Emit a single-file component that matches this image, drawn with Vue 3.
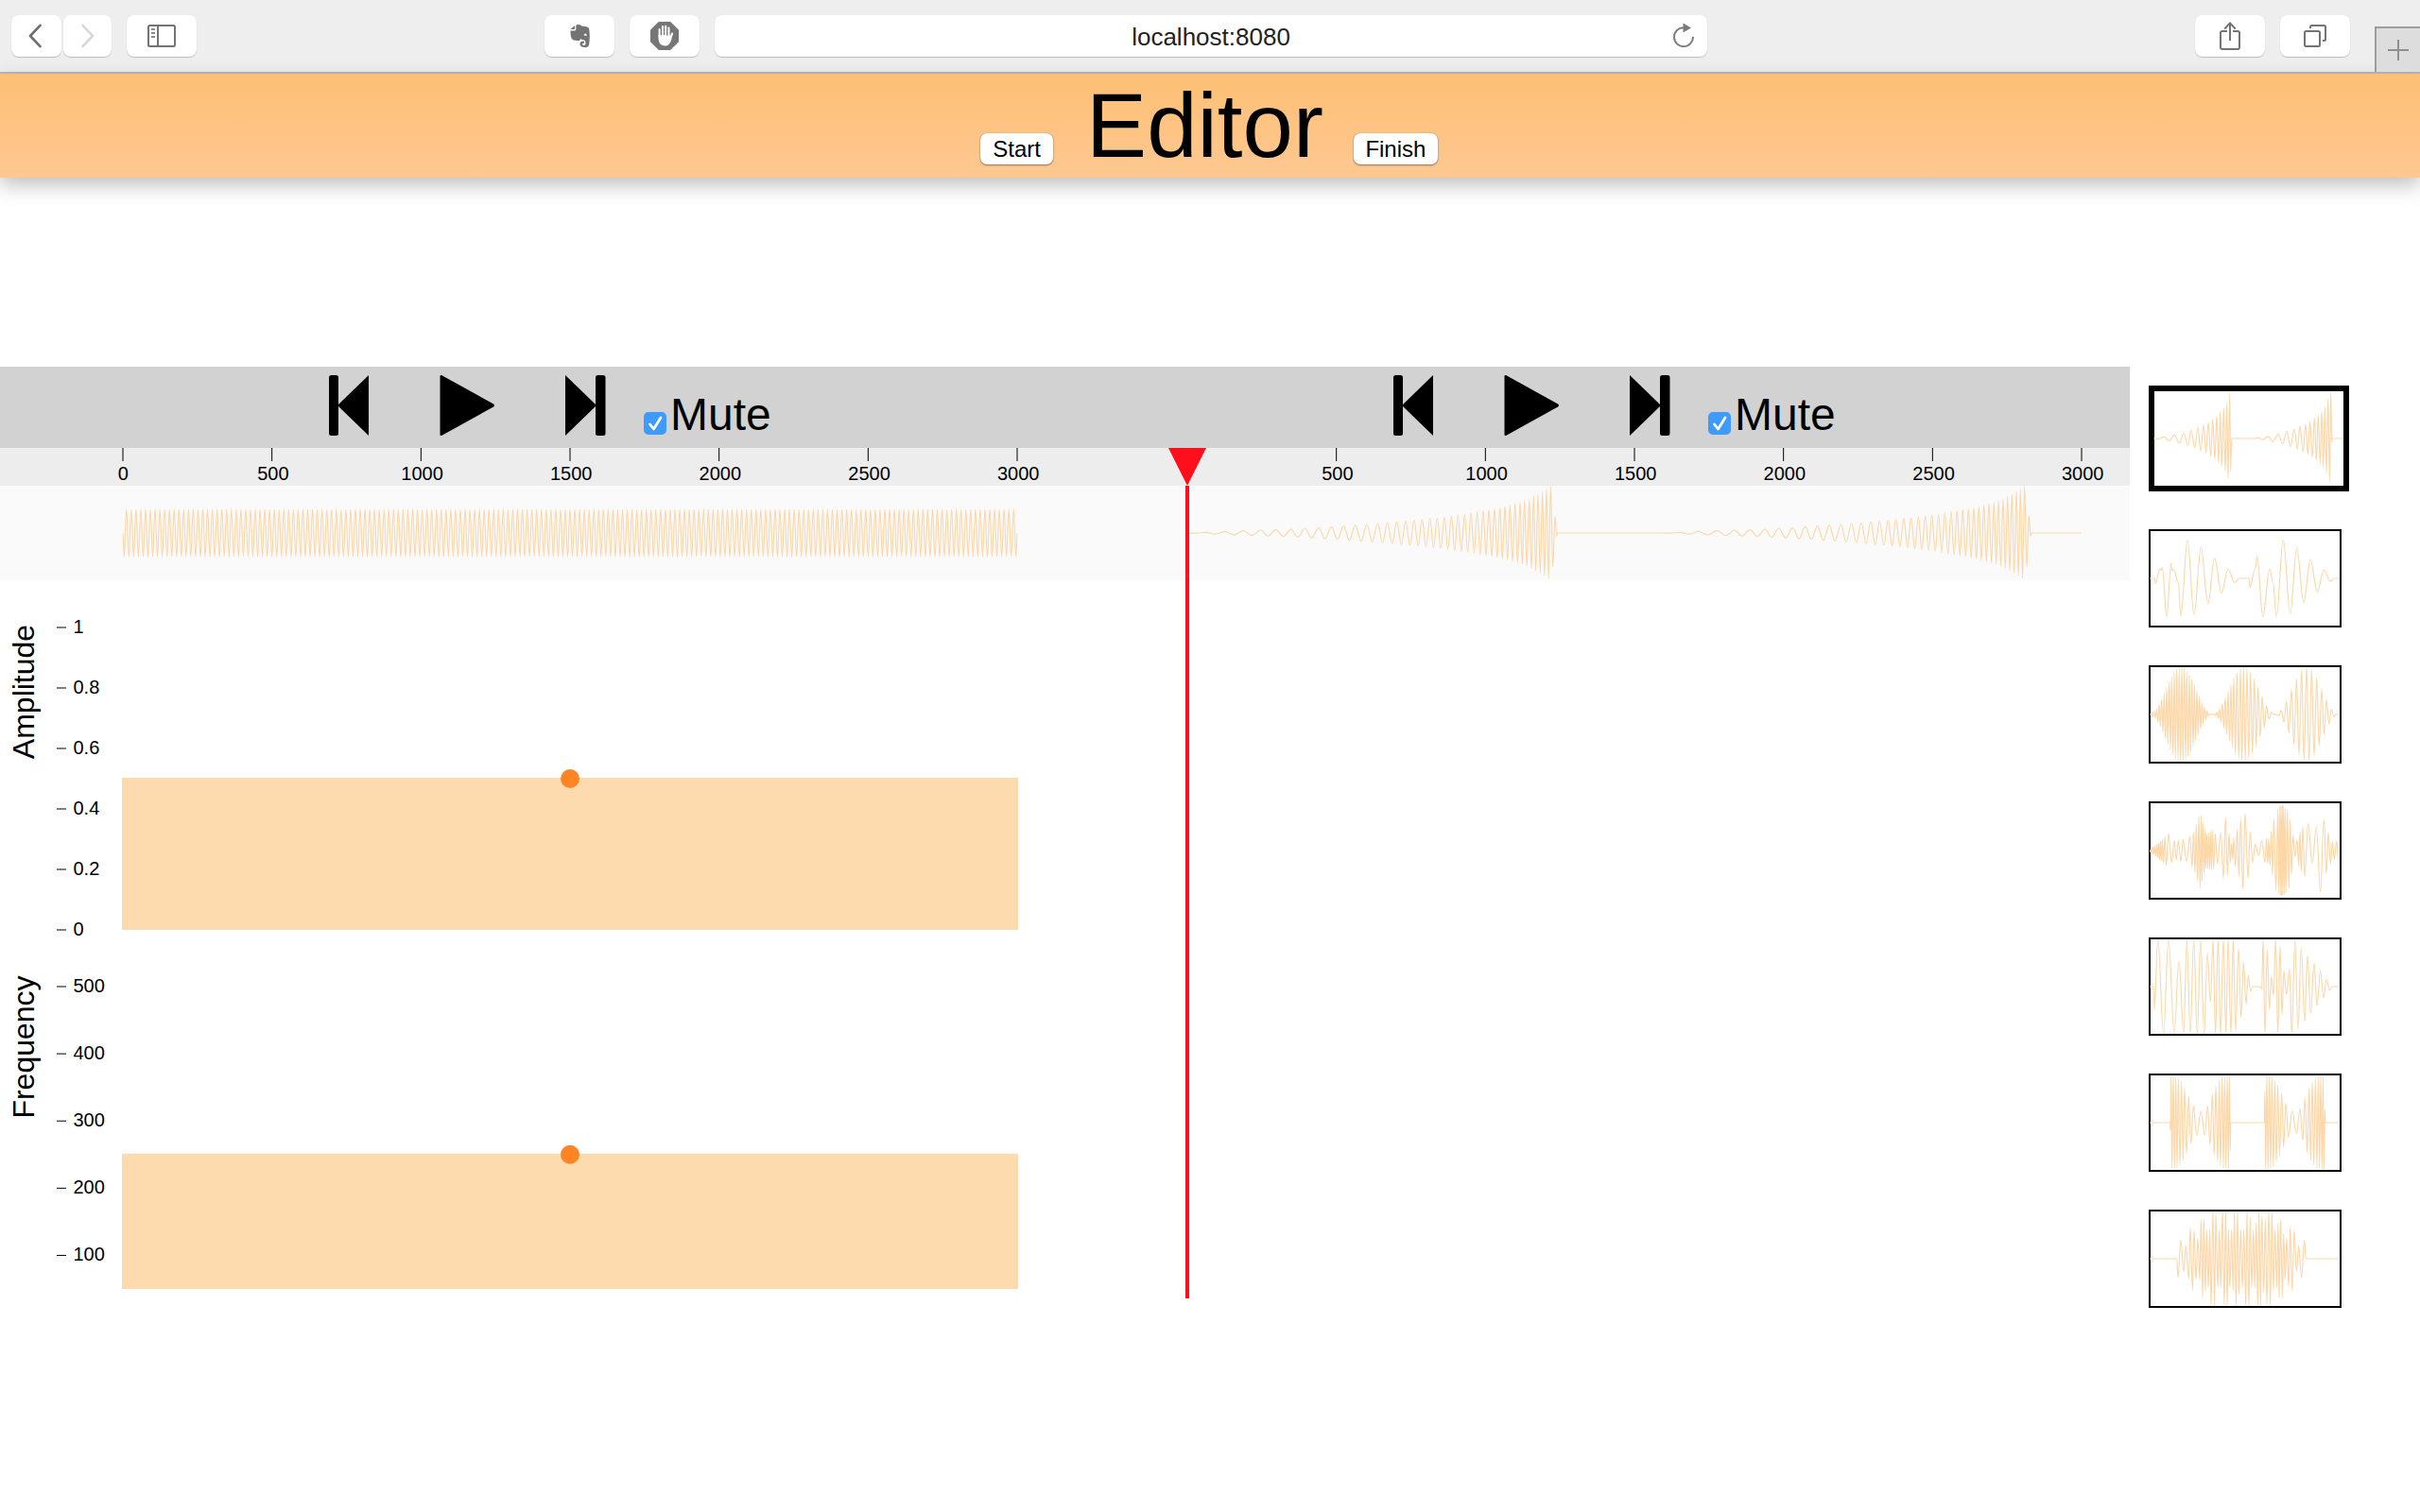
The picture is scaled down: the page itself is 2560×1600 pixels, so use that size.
<script setup>
// Smooth path through successive extrema; each half wave approximates a sine arc.
function smooth(points, ox = 0, oy = 0, scale = 1) {
  const p = points.map(([x, y]) => [(x - ox) / scale, (y - oy) / scale])
  let d = `M${p[0][0].toFixed(2)} ${p[0][1].toFixed(2)}`
  for (let i = 1; i < p.length; i++) {
    const [ax, ay] = p[i - 1]
    const [bx, by] = p[i]
    const k = (bx - ax) * 0.3642
    d += `C${(ax + k).toFixed(2)} ${ay.toFixed(2)} ${(bx - k).toFixed(2)} ${by.toFixed(2)} ${bx.toFixed(2)} ${by.toFixed(2)}`
  }
  return d
}

function parse(text) {
  return text.trim().split(/\s+/).map((pair) => pair.split(',').map(Number))
}

// Constant tone: 187.5 visible cycles
const tonePoints = [[130, 50]]
const half = 946 / 375
for (let i = 0; i < 375; i++) {
  tonePoints.push([130 + half * (i + 0.5), i % 2 ? 25 : 75])
}
tonePoints.push([1076, 50])
const tonePath = smooth(tonePoints)

// Rising chirp, played twice
const crests = parse(`77,160 137,157 196,155 250,153 299,152 347,150 391,147 435,145 475,142 514,140
  551,137 588,135 622,132 653,129 683,126 711,124 738,121 763,119 788,116 811,114 834,111 856,109
  877,105 898,102 918,98 938,94 957,91 975,89 993,86 1010,82 1026,77 1042,74 1058,68 1074,65
  1088,60 1103,55 1117,45 1131,38 1145,30 1158,23 1171,13`)
function burst(shift) {
  const out = [[18 + shift, 162], [50 + shift, 162.5]]
  crests.forEach(([x, y], i) => {
    out.push([x + shift, y])
    const next = crests[i + 1]
    if (next) out.push([(x + next[0]) / 2 + shift, 324 - (y + next[1]) / 2])
  })
  return out.concat([[1178, 269], [1185, 108], [1190, 172], [1193, 162]].map(([x, y]) => [x + shift, y]))
}
const chirpPath = smooth([...burst(0), ...burst(1504), [2856, 162]], -372, 12, 3)

// Three beating lobes with falling pitch
function beats() {
  const tops = [48, 56, 64, 72, 80, 88, 96, 104, 112, 120, 128, 136, 144, 152, 160, 168, 176, 184, 192, 200, 208,
    216, 224, 232, 240, 248, 256, 264, 273, 282, 291, 300, 309, 319, 330, 340, 351, 362, 374, 386, 399, 413, 428,
    444, 460, 476, 492, 508, 524, 540, 556, 572, 588, 603, 619, 635]
  const env = (x) => 150 * Math.sin((Math.PI * (x - 42)) / 199.5) ** 2
  const out = [[42, 228]]
  tops.forEach((x, i) => {
    out.push([x, 228 - env(x)])
    const n = tops[i + 1]
    if (n) out.push([(x + n) / 2, 228 + env((x + n) / 2)])
  })
  out.push([641, 228])
  return out
}

const thumbs = [
  { d: smooth(parse(`55,192 72,193 87,187 105,200 121,181 136,207 150,174 163,214 174,166 185,222 195,157 204,232
    213,149 221,239 228,142 236,248 242,131 249,257 255,120 261,268 266,107 271,280 277,97 282,294 287,76 291,320
    296,51 299,297 302,192 376,192 388,190 400,196 418,185 433,202 450,179 464,209 477,170 489,217 501,163 511,226
    519,154 529,234 537,147 544,242 551,138 558,251 565,127 571,261 577,118 583,272 588,104 593,286 598,93 603,303
    608,66 613,329 617,44 620,206 621,192 653,192`), 57, 42, 3), active: true },
  { d: smooth(parse(`42,636 58,636 60,652 75,607 79,610 82,602 96,758 110,588 113,612 118,606 133,650 141,755 162,514
    183,752 205,537 227,717 248,572 270,683 291,606 311,649 328,636 358,636 360,665 377,606 383,566 401,758 423,606
    434,650 444,758 466,514 488,748 509,541 531,712 552,576 574,679 595,610 615,645 628,636 641,636`), 45, 486, 3) },
  { d: smooth(beats(), 45, 78, 3) },
  { d: smooth(parse(`42,660 44,664 46,655 49,669 52,650 55,672 58,645 61,678 64,640 67,683 70,635 73,689 76,630 79,694
    82,625 86,699 90,617 95,707 102,608 112,700 120,628 127,690 133,628 141,695 148,625 159,694 170,616 177,712
    181,601 186,731 190,576 194,756 198,551 202,780 206,550 208,758 211,573 215,737 218,592 220,716 223,608 226,717
    229,603 232,719 235,600 238,722 241,595 245,719 250,606 257,702 268,605 276,748 283,556 289,739 294,603 298,698
    302,638 306,689 309,620 314,710 320,594 325,741 331,560 338,783 345,541 354,749 361,601 369,698 377,640 388,676
    398,628 408,698 413,620 417,702 420,622 424,707 428,599 432,738 436,558 443,788 449,526 452,796 455,520 457,802
    459,518 461,803 463,515 465,802 467,518 470,798 472,525 475,792 479,530 484,780 488,561 492,735 497,612 503,680
    510,625 515,709 519,601 523,727 528,586 534,743 545,575 558,701 571,586 584,792 595,563 603,734 609,603 616,702
    622,631 628,689 635,630 641,689`), 45, 510, 3) },
  { d: smooth(parse(`42,192 56,192 57,266 68,42 86,342 102,42 120,342 135,110 150,342 160,42 171,342 182,42 193,342
    204,42 215,342 225,85 235,242 243,45 251,342 259,42 267,342 276,42 284,342 291,42 300,342 307,42 315,333 324,71
    332,290 340,114 348,247 355,157 362,206 369,192 390,192 398,199 402,42 408,342 415,76 422,265 428,160 435,218
    442,42 449,342 456,64 462,281 468,143 476,218 486,136 493,342 503,45 513,327 523,69 534,302 543,94 553,278
    564,118 573,252 584,143 594,227 603,168 613,203 621,192 641,192`), 45, 42, 3) },
  { d: smooth(parse(`42,624 107,624 108,650 110,476 113,772 117,477 121,770 125,477 129,768 133,484 138,760 143,493
    148,745 153,513 159,722 166,541 173,690 181,571 191,664 205,589 217,664 226,571 234,695 241,532 247,728 252,507
    258,749 263,490 267,762 272,481 276,768 280,478 284,770 288,476 292,772 295,475 298,712 299,624 406,624 408,523
    410,772 414,475 418,772 422,477 426,770 430,480 435,765 439,490 444,750 449,505 454,730 461,529 467,702 474,562
    483,671 494,587 508,659 519,580 528,680 535,545 542,720 548,514 553,743 558,496 563,758 568,484 573,767 577,477
    581,769 585,477 589,771 592,476 595,772 598,583 600,624 641,624`), 45, 474, 3) },
  { d: smooth(parse(`42,1056 128,1056 132,1115 141,997 150,1097 157,1015 166,1120 171,956 178,1157 183,965 189,1122
    195,990 201,1125 205,931 210,1180 214,931 219,1161 223,963 228,1148 233,963 237,1206 243,906 248,1206 252,915
    258,1148 263,963 268,1148 273,906 279,1206 283,906 288,1206 292,963 297,1148 302,963 307,1157 311,906 316,1206
    321,906 325,1169 331,963 336,1148 341,963 347,1206 351,906 357,1206 361,924 366,1148 371,963 376,1148 380,943
    385,1206 389,906 394,1206 398,921 404,1163 409,930 414,1200 420,906 425,1206 430,906 435,1155 440,963 445,1148
    450,943 453,1180 458,931 463,1180 467,976 472,1122 477,990 483,1145 488,956 494,1157 501,967 508,1097 515,1015
    524,1115 533,997 538,1056 641,1056`), 45, 906, 3) },
]

const times = [0, 500, 1000, 1500, 2000, 2500, 3000]
const tickX = (t) => 130 + (t * 946) / 3000
const tracks = [0, 1]

const amplitude = [1, 0.8, 0.6, 0.4, 0.2, 0].map((v) => ({ v, y: 50 + (1 - v) * 320 }))
const frequency = [500, 400, 300, 200, 100].map((v) => ({ v, y: 60 + ((500 - v) * 320) / 450 }))
</script>

<template>
  <div class="window">
    <header class="toolbar">
      <div class="tools">
        <div class="nav">
          <button class="tool back">
            <svg width="16" height="26" viewBox="0 0 16 26"><path d="M13.5 1.8 3 13l10.5 11.2" fill="none" stroke="#6e6e6e" stroke-width="2.6" stroke-linecap="round" stroke-linejoin="round" /></svg>
          </button>
          <button class="tool forward">
            <svg width="16" height="26" viewBox="0 0 16 26"><path d="M2.5 1.8 13 13 2.5 24.2" fill="none" stroke="#d8d8d8" stroke-width="2.6" stroke-linecap="round" stroke-linejoin="round" /></svg>
          </button>
        </div>
        <button class="tool wide">
          <svg width="30" height="24" viewBox="0 0 30 24">
            <rect x="1" y="1" width="28" height="22" rx="1.5" fill="none" stroke="#737373" stroke-width="2" />
            <path d="M11 1v22" stroke="#737373" stroke-width="2" />
            <path d="M4 5h4M4 9h4M4 13h4" stroke="#8c8c8c" stroke-width="2" />
          </svg>
        </button>
      </div>
      <div class="tools middle">
        <button class="tool wide">
          <svg class="elephant" width="21" height="25" viewBox="0 0 21 25">
            <path d="M.4 4.9 5.2.9v3q0 1-1 1Z" fill="#747474" />
            <path d="M6.4 1.2Q6.4.2 8 .1q3.5-.3 4.3 1.5l4.9.6q2.6.3 3 2.5c.9 5.500.6 10.6.1 15.5-.3 2.9-1.7 4-4.2 4-3.300 0-5.6-1-5.6-3.6 0-2.3 1.5-3.2 4.3-3v2.3c-1.5-.1-1.9.3-1.900.9 0 .8.7 1.1 1.8 1.1 1.4 0 1.8-.9 1.8-2.3 0-2.2-1.1-3.4-2.8-3.5-1.6 0-1.9-.8-2.3-1.7-.5 2.1-1.5 2.8-3.5 2.6-3.2-.2-5.5-.3-6.1-2.2C.7 12.3.3 9 .5 6.400h4.300q1.600 0 1.600-1.600Z" fill="#747474" />
            <path d="M14.6 11.6q.4-2.2 1.7-2.1 1.5.2 1.4 2.4-1.4-.7-3.1-.3Z" fill="#fff" />
          </svg>
        </button>
        <button class="tool wide">
          <svg width="30" height="30" viewBox="0 0 30 30">
            <path d="M8.8 0h12.4L30 8.8v12.4L21.2 30H8.8L0 21.2V8.8Z" fill="#767676" />
            <path d="M9.7 8v9M13 5.2V16M16.2 4.800V16M19.400 6.700V17M23 12.600l-2.100 6" stroke="#fff" stroke-width="2.2" stroke-linecap="round" />
            <path d="M8.6 14h11.900l.8 3.800h1.300c-1.100 4.200-3 7.800-6.900 7.800-4.500 0-7.100-3-7.100-8Z" fill="#fff" />
            <path d="M11.35 7v7.500M14.600 6v8M17.800 7v8" stroke="#767676" stroke-width=".9" />
          </svg>
        </button>
        <div class="address">
          <span>localhost:8080</span>
          <svg width="24" height="28" viewBox="0 0 24 28">
            <path d="M12 5.200A10 10 0 1 0 22 15" fill="none" stroke="#7b7b7b" stroke-width="2" />
            <path d="M11.500.500v10l8.500-5Z" fill="#7b7b7b" />
          </svg>
        </div>
      </div>
      <div class="tools right">
        <button class="tool wide">
          <svg width="24" height="32" viewBox="0 0 24 32">
            <path d="M9 11H4q-2 0-2 2v15q0 2 2 2h16q2 0 2-2V13q0-2-2-2h-5M12 21V3M6.300 8.500 12 2.400l5.700 6.100" fill="none" stroke="#737373" stroke-width="2" />
          </svg>
        </button>
        <button class="tool wide">
          <svg width="26" height="26" viewBox="0 0 26 26">
            <rect x="2" y="8" width="16" height="16" rx="1.5" fill="none" stroke="#737373" stroke-width="2" />
            <path d="M8 5V3.500Q8 2 9.500 2h13Q24 2 24 3.500v13q0 1.500-1.500 1.500H21" fill="none" stroke="#737373" stroke-width="2" />
          </svg>
        </button>
        <button class="new-tab">
          <svg width="22" height="22" viewBox="0 0 22 22"><path d="M11 0v22M0 11h22" stroke="#8f8f8f" stroke-width="2" /></svg>
        </button>
      </div>
    </header>

    <div class="banner">
      <button class="push">Start</button>
      <h1>Editor</h1>
      <button class="push finish">Finish</button>
    </div>

    <main class="editor">
      <section class="workspace">
        <div class="controls">
          <div v-for="t in tracks" :key="t" class="player">
            <svg class="prev" width="42" height="66" viewBox="0 0 42 66">
              <rect x="0" y="1" width="10" height="64" rx="2.5" />
              <path d="M42 1v64L9 33Z" />
            </svg>
            <svg class="play" width="60" height="66" viewBox="0 0 60 66">
              <path d="M.5 1.500 2 1 57 31.500q2 1.500 0 3L2 65l-1.500-.5Z" />
            </svg>
            <svg class="next" width="43" height="66" viewBox="0 0 43 66">
              <path d="M0 1v64l33-32Z" />
              <rect x="32" y="1" width="10.5" height="64" rx="2.5" />
            </svg>
            <label class="mute">
              <span class="check">
                <svg width="24" height="24" viewBox="0 0 24 24"><path d="m6.500 13 4 5L18 6" fill="none" stroke="#fff" stroke-width="2.8" stroke-linecap="round" stroke-linejoin="round" /></svg>
              </span>
              <span>Mute</span>
            </label>
          </div>
        </div>

        <div class="axis">
          <svg v-for="t in tracks" :key="t" width="1126" height="40">
            <g v-for="m in times" :key="m">
              <template v-if="!(t === 1 && m === 0)">
                <line :x1="tickX(m)" :x2="tickX(m)" y1="0" y2="14" />
                <text :x="tickX(m) + (m ? 1.2 : 0.3)" y="34" text-anchor="middle">{{ m }}</text>
              </template>
            </g>
          </svg>
        </div>

        <div class="waves">
          <svg width="1126" height="100"><path :d="tonePath" /></svg>
          <svg width="1126" height="100"><path :d="chirpPath" /></svg>
        </div>

        <svg class="chart" width="1126" height="370">
          <text class="name" transform="translate(36 118) rotate(-90)" text-anchor="middle">Amplitude</text>
          <g v-for="a in amplitude" :key="a.v">
            <line x1="60" x2="70" :y1="a.y" :y2="a.y" />
            <text x="77.5" :y="a.y + 6">{{ a.v }}</text>
          </g>
          <rect x="129" y="209" width="948" height="161" />
          <circle cx="603" cy="210" r="10" />
        </svg>

        <svg class="chart" width="1126" height="380">
          <text class="name" transform="translate(36 124) rotate(-90)" text-anchor="middle">Frequency</text>
          <g v-for="f in frequency" :key="f.v">
            <line x1="60" x2="70" :y1="f.y" :y2="f.y" />
            <text x="77.5" :y="f.y + 6">{{ f.v }}</text>
          </g>
          <rect x="129" y="236.8" width="948" height="143.2" />
          <circle cx="603" cy="237.8" r="10" />
        </svg>

        <div class="playhead">
          <svg width="40" height="40"><path d="M0 0h40L20 40Z" /></svg>
          <div class="stem"></div>
        </div>
      </section>

      <aside class="examples">
        <div v-for="(w, i) in thumbs" :key="i" class="thumb" :class="{ active: w.active }">
          <svg width="200" height="100"><path :d="w.d" /></svg>
        </div>
      </aside>
    </main>
  </div>
</template>

<style>
body {
  margin: 0;
  background: #fff;
}
</style>

<style scoped>
.window {
  width: 2560px;
  height: 1600px;
  overflow: hidden;
  background: #fff;
  color: #000;
  font-family: "Liberation Sans", Arial, sans-serif;
}
button {
  margin: 0;
  padding: 0;
  border: 0;
  font: inherit;
  color: inherit;
}
svg {
  display: block;
  flex: none;
}
.toolbar {
  box-sizing: border-box;
  display: flex;
  height: 78px;
  padding: 16px 0 0 12px;
  border-bottom: 2px solid #b9b9b9;
  background: #eee;
}
.tools {
  display: flex;
  align-items: flex-start;
  gap: 16px;
}
.nav {
  display: flex;
  gap: 2px;
}
.tool,
.address {
  display: flex;
  align-items: center;
  justify-content: center;
  height: 44px;
  border-radius: 8px;
  background: #fff;
  box-shadow: 0 1px 1px #bdbdbd;
}
.back {
  box-sizing: border-box;
  width: 53px;
  padding-right: 4px;
}
.forward {
  width: 51px;
}
.wide {
  width: 74px;
}
.elephant {
  margin-left: 1px;
}
.middle {
  margin-left: 368px;
}
.right {
  margin-left: auto;
}
.address {
  box-sizing: border-box;
  width: 1050px;
  padding: 0 13px 0 37px;
  color: #222;
  font-size: 26px;
}
.address span {
  flex: 1;
  text-align: center;
  line-height: 44px;
  padding-top: 2px;
}
.right .wide + .wide {
  margin: 0 10px 0 0;
}
.new-tab {
  box-sizing: border-box;
  display: flex;
  align-items: center;
  justify-content: center;
  width: 48px;
  height: 48px;
  margin-top: 12px;
  border: 2px solid #9d9d9d;
  border-width: 2px 0 0 2px;
  background: #ddd;
}
.banner {
  display: flex;
  align-items: baseline;
  justify-content: center;
  box-sizing: border-box;
  height: 110px;
  padding-right: 2px;
  background: linear-gradient(#fdbf74, #fec891);
  box-shadow: 0 8px 20px rgba(0, 0, 0, 0.25);
}
.banner h1 {
  margin: 0 32px 0 35px;
  font-size: 96px;
  font-weight: 400;
  line-height: 110px;
}
.push {
  width: 77px;
  height: 33px;
  border-radius: 7px;
  background: #fff;
  box-shadow: 0 0 1px rgba(0, 0, 0, 0.4), 0 1px 2px rgba(0, 0, 0, 0.4);
  font-size: 24px;
  line-height: 33px;
}
.finish {
  width: 89px;
}
.editor {
  display: flex;
  align-items: flex-start;
  margin-top: 200px;
}
.workspace {
  position: relative;
  width: 2253px;
}
.controls {
  display: flex;
  height: 86px;
  background: #d2d2d2;
}
.player {
  display: flex;
  align-items: flex-start;
  width: 1126px;
  padding-top: 8px;
  box-sizing: border-box;
}
.prev {
  margin-left: 348px;
}
.play {
  margin-left: 75px;
}
.next {
  margin-left: 73px;
}
.mute {
  display: flex;
  align-items: flex-start;
  margin: 15px 0 0 40px;
  font-size: 48px;
  line-height: 55px;
}
.check {
  width: 24px;
  height: 24px;
  margin: 25px 4px 0 0;
  border-radius: 5px;
  background: #3e9bfb;
}
.axis {
  display: flex;
  height: 40px;
  background: #ededed;
}
.axis svg,
.waves svg,
.chart {
  overflow: visible;
}
.axis text,
.chart text {
  font-size: 20px;
}
.axis line,
.chart line {
  stroke: #000;
  stroke-width: 1;
}
.waves {
  display: flex;
  height: 100px;
  background: #fafafa;
}
.waves path,
.thumb path {
  fill: none;
  stroke: #fdd7a8;
  stroke-width: 1.15;
}
.chart .name {
  font-size: 32px;
}
.chart rect {
  fill: #fedbaf;
}
.chart circle {
  fill: #fe8424;
}
.playhead {
  position: absolute;
  top: 86px;
  left: 1236px;
  width: 40px;
  height: 900px;
}
.playhead path {
  fill: #ff0f1b;
}
.stem {
  width: 4px;
  height: 860px;
  margin-left: 18px;
  background: #ff0f1b;
}
.examples {
  display: flex;
  flex-direction: column;
  align-items: flex-start;
  gap: 40px;
  margin: 20px 0 0 20px;
}
.thumb {
  border: 2px solid #000;
}
.thumb.active {
  border-width: 6px;
}
.thumb svg {
  overflow: visible;
}
</style>
